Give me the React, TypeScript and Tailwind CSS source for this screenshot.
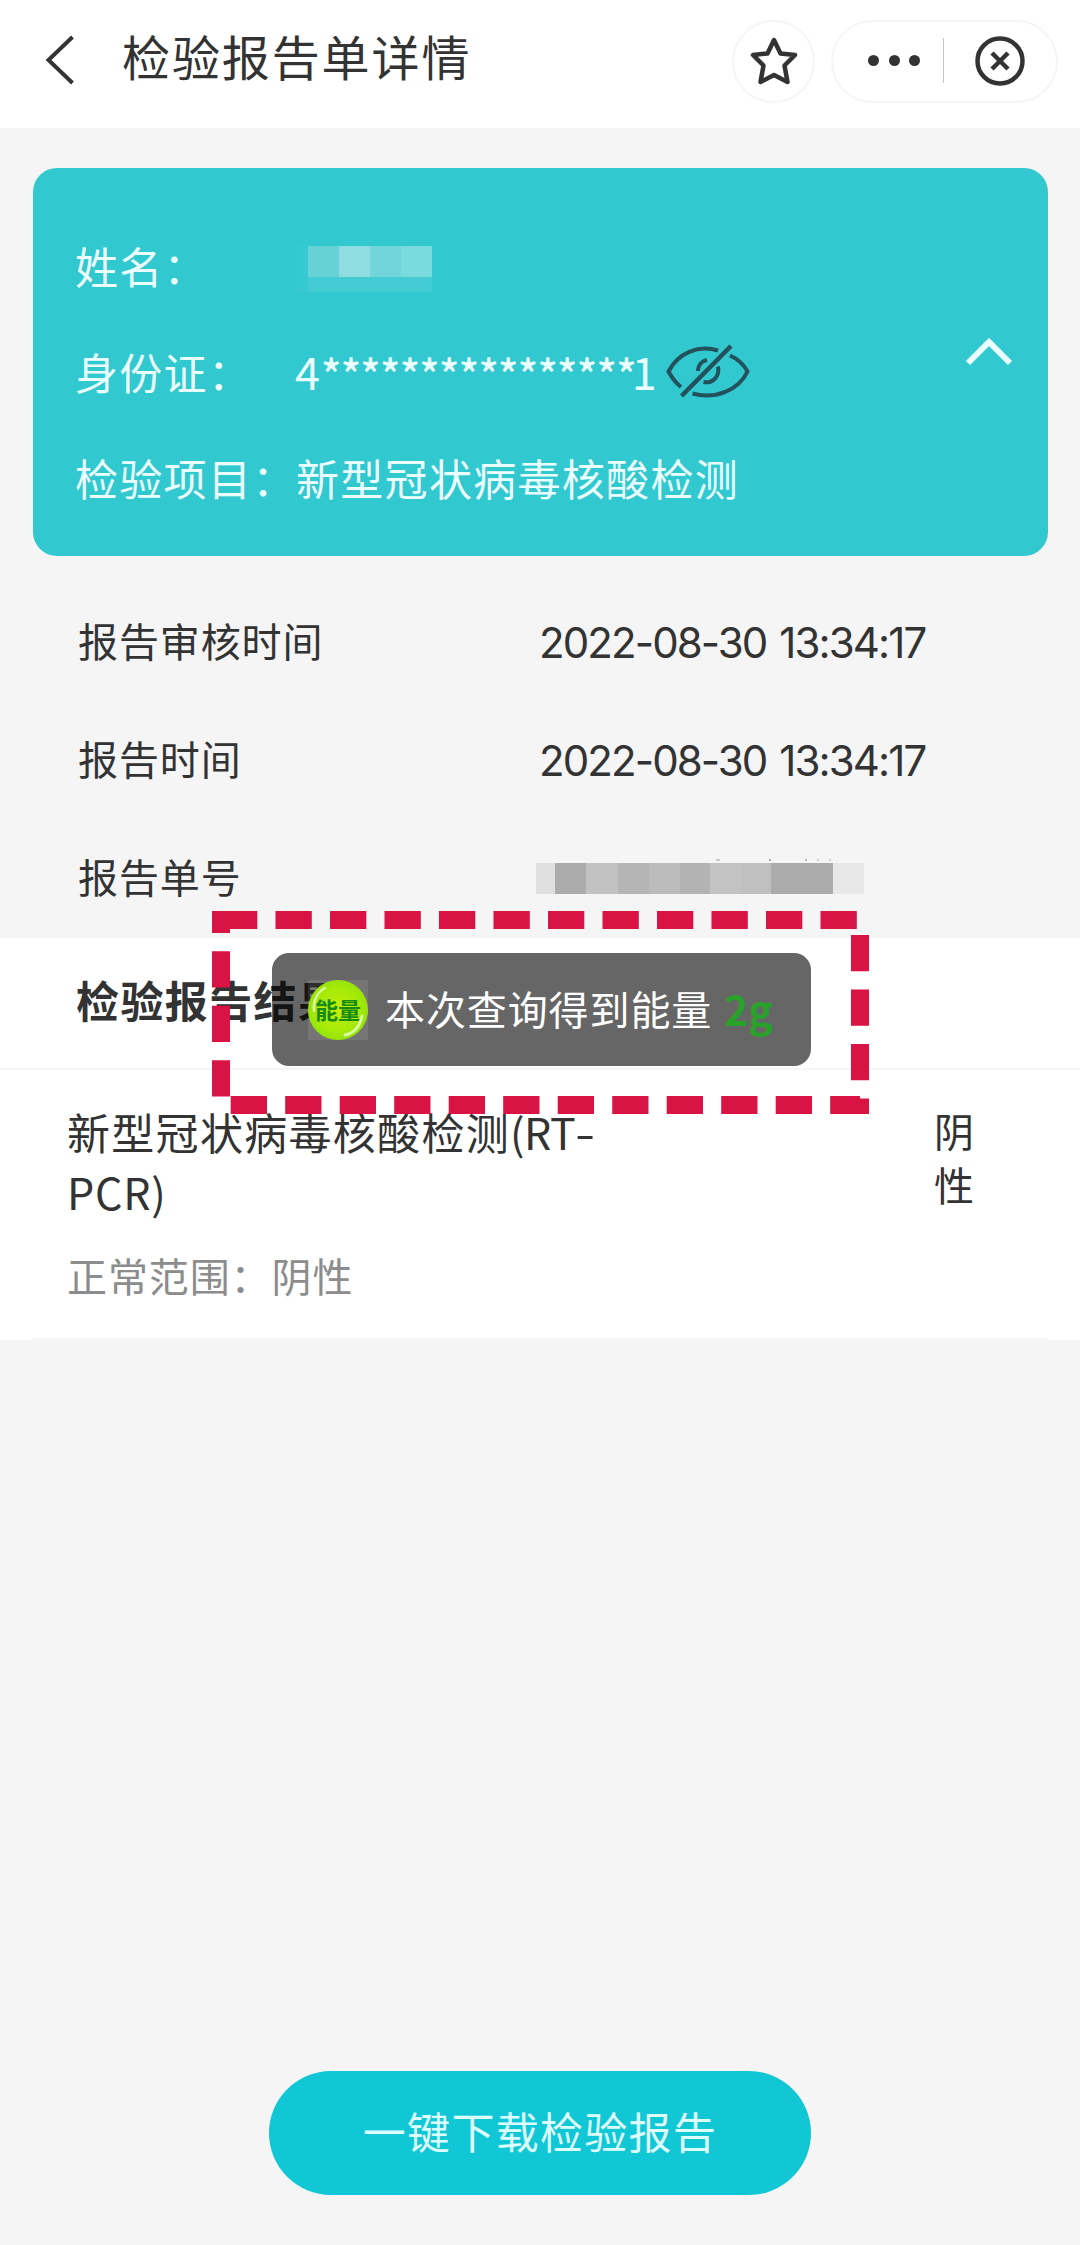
import type {ReactNode} from "react";

const nameMosaic = ["bg-[#66d2d6]", "bg-[#8fdde0]", "bg-[#72d5d9]", "bg-[#7adadd]"];

const numberMosaic = [
	"w-[19px] bg-[#e0e0e0]",
	"w-[31px] bg-[#acacac]",
	"w-[32px] bg-[#c2c2c2]",
	"w-[31px] bg-[#b5b5b5]",
	"w-[31px] bg-[#bcbcbc]",
	"w-[30px] bg-[#b3b3b3]",
	"w-[31px] bg-[#c3c3c3]",
	"w-[30px] bg-[#c0c0c0]",
	"w-[62px] bg-[#acacac]",
	"w-[31px] bg-[#e8e8e8]",
];

function EyeOff() {
	return (
		<svg className="ml-[8px] w-[86px] h-[56px]" viewBox="0 0 86 56" fill="none" stroke="#24525c" strokeWidth="4">
			<path d="M53 7.5C33 1.5 13 10 3.5 28.5C7 35 11 40 16 44" />
			<path d="M65 12.5C73 16 79 22 82.500 28.500C74 47 50 57 27.500 50.500" />
			<path d="M33 28C33 22 37 18 42 17" />
			<path d="M53 23.500C55 33 48 41 38.500 39" />
			<path d="M16.500 53L66 3" strokeWidth="4.600" />
		</svg>
	);
}

function Topbar() {
	return (
		<header className="h-32 bg-white flex items-start pl-[44px] pr-[22px]">
			<svg className="w-8 h-[52px] mt-[34px]" viewBox="0 0 32 52" fill="none" stroke="#333" strokeWidth="4">
				<path d="M28.500 3L4.500 26L28.500 49" />
			</svg>
			<h1 className="ml-[46px] mt-[19px] text-[48px] leading-[72px] tracking-[1.9px]">检验报告单详情</h1>
			<div className="ml-auto mt-5 flex gap-4">
				<button className="size-[83px] rounded-full border-2 border-[#f5f5f5] flex items-center justify-center">
					<svg className="size-[52px] -mt-[2px]" viewBox="0 0 52 52" fill="none" stroke="#333" strokeWidth="4.500" strokeLinejoin="round">
						<path d="M26 5L32.500 18.500L47 20L36.500 30.500L39.500 47L26 40L12.500 47L15.500 30.500L5 20L19.500 18.500Z" />
					</svg>
				</button>
				<div className="w-[227px] h-[83px] rounded-full border-2 border-[#f5f5f5] flex items-center pl-[35px] pb-[2px]">
					<div className="flex gap-[9.500px]">
						<i className="size-[11px] rounded-full bg-[#333]" />
						<i className="size-[11px] rounded-full bg-[#333]" />
						<i className="size-[11px] rounded-full bg-[#333]" />
					</div>
					<i className="ml-[23px] w-px h-[45px] bg-[#c4c4c4]" />
					<svg className="ml-[31px] size-[50px]" viewBox="0 0 50 50" fill="none" stroke="#333" strokeWidth="4.500">
						<circle cx="25" cy="25" r="22.500" />
						<path d="M17 17L33 33M33 17L17 33" />
					</svg>
				</div>
			</div>
		</header>
	);
}

function CardRow({label, children}: {label: string; children: ReactNode}) {
	return (
		<div className="h-[106px] flex items-center">
			<span className="w-[221px] shrink-0 tracking-[1.3px]">{label}</span>
			{children}
		</div>
	);
}

function PatientCard() {
	return (
		<section className="mt-10 ml-[33px] w-[1015px] h-[388px] rounded-3xl bg-[#31c8d0] pl-[42px] pr-[34px] pt-[44px] flex text-[43px] leading-[64px] text-[#eaffff]">
			<div className="flex-1">
				<CardRow label="姓名：">
					<div className="w-[136px] h-[46px] pl-3 mt-[7px] bg-[#36c9d1]">
						<div className="flex h-[31px]">
							{nameMosaic.map((color) => (
								<i key={color} className={"w-[31px] " + color} />
							))}
						</div>
						<div className="h-[15px] bg-[#43ccd3]" />
					</div>
				</CardRow>
				<CardRow label="身份证：">
					<span className="text-[45px] -ml-px">4</span>
					<span className="ml-px text-[42px] font-medium mt-1 tracking-[-0.65px]">****************</span>
					<span className="text-[45px] -ml-[4px]">1</span>
					<EyeOff />
				</CardRow>
				<CardRow label="检验项目：">
					<span className="tracking-[1.3px]">新型冠状病毒核酸检测</span>
				</CardRow>
			</div>
			<svg className="w-[50px] h-[32px] mt-[124px]" viewBox="0 0 50 32" fill="none" stroke="#eaffff" strokeWidth="6">
				<path d="M4 27L25 6L46 27" />
			</svg>
		</section>
	);
}

function InfoRow({label, children}: {label: string; children: ReactNode}) {
	return (
		<div className="h-[118px] flex items-center">
			<span className="w-[461px] text-[40px] tracking-[0.9px]">{label}</span>
			{children}
		</div>
	);
}

function DateText({children}: {children: ReactNode}) {
	return (
		<span className="mt-[5px] text-[42px] font-[Inter,sans-serif] tracking-[-1.9px] [word-spacing:3px]">
			{children}
		</span>
	);
}

function Toast() {
	return (
		<div className="absolute left-[272px] top-[953px] w-[539px] h-[113px] rounded-[17px] bg-black/60 flex items-center pl-9 text-white">
			<div className="relative size-[60px] bg-white/10">
				<div className="size-[60px] rounded-full bg-radial from-[#c5ee08] via-[#a6ea08] to-[#7ddb0c] flex items-center justify-center text-[23px] font-bold text-[#178a12]">
					能量
				</div>
				{/* glossy edges of the energy ball */}
				<svg className="absolute inset-0 size-[60px]" viewBox="0 0 60 60" fill="none" stroke="#dcfba0" strokeLinecap="round">
					<path d="M6 31C5 21 9 12 17 8" strokeWidth="2.500" />
					<path d="M54 36C52 46 46 53 37 55" strokeWidth="3" />
				</svg>
			</div>
			<span className="ml-[17px] -mt-1 text-[40px] tracking-[0.9px]">本次查询得到能量</span>
			<b className="ml-[12px] -mt-[2px] text-[41px] text-[#28a228]">2g</b>
		</div>
	);
}

export default function App() {
	return (
		<div className="relative w-[1080px] h-[2245px] bg-[#f5f5f5] text-[#333] font-['Noto_Sans_CJK_SC',sans-serif] overflow-hidden whitespace-nowrap">
			<Topbar />
			<PatientCard />

			<section className="h-[382px] pt-[25px] pl-[78px]">
				<InfoRow label="报告审核时间">
					<DateText>2022-08-30 13:34:17</DateText>
				</InfoRow>
				<InfoRow label="报告时间">
					<DateText>2022-08-30 13:34:17</DateText>
				</InfoRow>
				<InfoRow label="报告单号">
					<div className="-ml-[3px] mt-[1px]">
						<div className="flex h-1 gap-[34px] pl-[180px]">
							<i className="w-1 h-[2px] bg-[#c8c8c8]" />
							<i className="ml-[15px] size-[2px] bg-[#aaa]" />
							<i className="size-[2px] bg-[#bbb]" />
							<i className="-ml-[24px] size-[2px] bg-[#ccc]" />
							<i className="-ml-[24px] size-[2px] bg-[#ccc]" />
						</div>
						<div className="flex h-[31px]">
							{numberMosaic.map((cell, i) => (
								<i key={i} className={cell} />
							))}
						</div>
					</div>
				</InfoRow>
			</section>

			<section className="bg-white h-[402px]">
				<h2 className="h-[132px] border-b-2 border-[#f6f6f6] pl-[76px] pt-[29px] text-[43px] leading-[64px] tracking-[1.4px] font-bold">
					检验报告结果
				</h2>
				<div className="flex justify-between pl-[67px] pr-[106px] pt-[31px]">
					<div className="text-[43px] leading-[60px]">
						<p>
							<span className="tracking-[1.3px]">新型冠状病毒核酸检测</span>
							<span className="tracking-[-0.6px]">(RT</span>
							<span className="inline-block origin-left scale-x-135">-</span>
							<br />
							<span className="tracking-[0.8px]">PCR)</span>
						</p>
						<p className="mt-[24px] text-[40px] tracking-[0.9px] text-[#8c8c8c]">正常范围：阴性</p>
					</div>
					<p className="text-[40px] leading-[54px] mt-[2px]">
						阴
						<br />性
					</p>
				</div>
				<div className="mx-[33px] mt-[33px] h-[3px] bg-[#f5f5f5]" />
			</section>

			<button className="mt-[731px] ml-[269px] w-[542px] h-[124px] pb-[6px] rounded-full bg-[#11c7d6] text-[#dcffff] text-[43px] tracking-[1.3px]">
				一键下载检验报告
			</button>

			<Toast />

			{/* highlight frame round the toast */}
			<svg className="absolute left-[212px] top-[911px] w-[657px] h-[203px]" viewBox="0 0 657 203" fill="none">
				<path d="M9 9H648V194H9Z" stroke="#d91444" strokeWidth="18" strokeDasharray="36.300 18.200" />
			</svg>
		</div>
	);
}
